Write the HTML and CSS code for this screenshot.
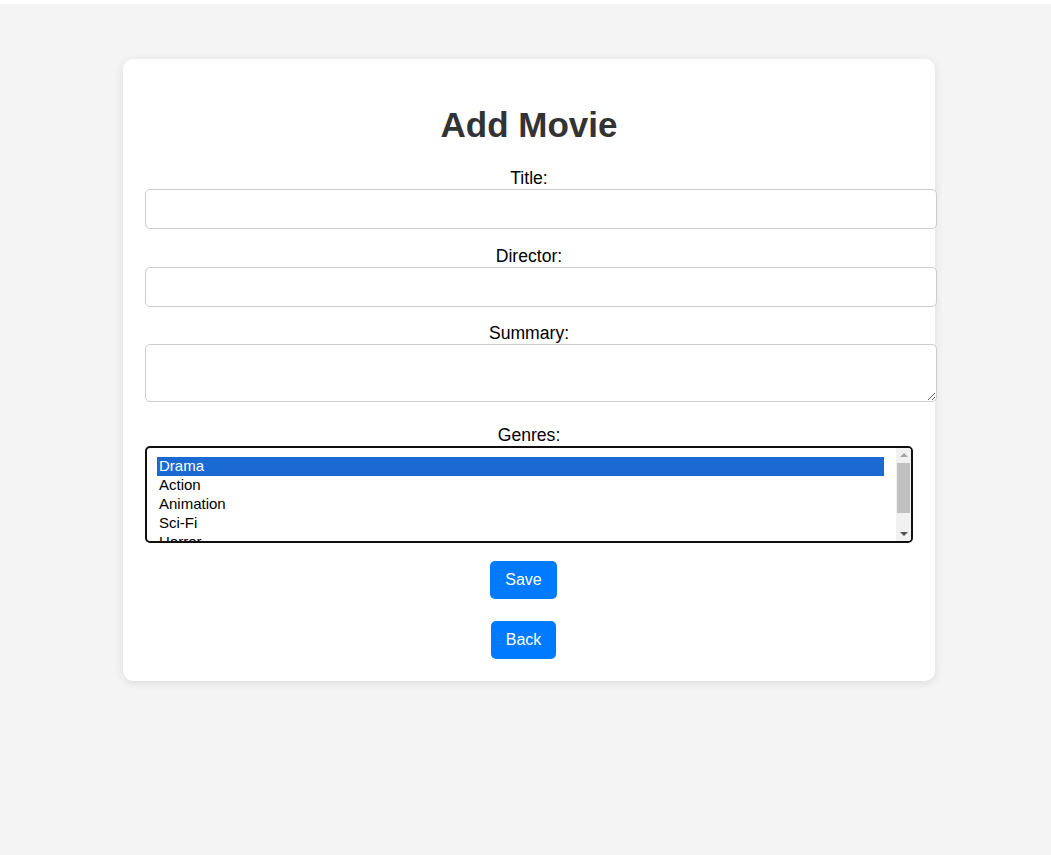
FILE: index.html
```html
<!DOCTYPE html>
<html lang="en">
<head>
<meta charset="utf-8">
<title>Add Movie</title>
<link rel="stylesheet" href="styles.css">
</head>
<body>
<div class="card">
  <h1 class="title">Add Movie</h1>
  <form class="form">
    <label class="label" for="title">Title:</label>
    <input class="field" type="text" id="title">
    <label class="label" for="director">Director:</label>
    <input class="field field-last" type="text" id="director">
    <label class="label" for="summary">Summary:</label>
    <textarea class="field area" id="summary"></textarea>
    <label class="label" for="genres">Genres:</label>
    <div class="select-wrap">
      <select class="genres" id="genres" multiple>
        <option selected>Drama</option>
        <option>Action</option>
        <option>Animation</option>
        <option>Sci-Fi</option>
        <option>Horror</option>
        <option>Comedy</option>
      </select>
      <div class="fake-scroll" aria-hidden="true">
        <span class="arrow arrow-up"></span>
        <span class="thumb"></span>
        <span class="arrow arrow-down"></span>
      </div>
    </div>
    <div class="actions">
      <button class="btn" type="button">Save</button>
      <button class="btn" type="button">Back</button>
    </div>
  </form>
</div>
</body>
</html>
```

FILE: styles.css
```css
html {
  background: #ffffff;
}
body {
  margin: 4px 0 0 0;
  padding: 0 0 0 7px;
  min-height: 851px;
  background: #f4f4f4;
  font-family: "Liberation Sans", Arial, sans-serif;
  display: flex;
  flex-direction: column;
  align-items: center;
}
.card {
  margin-top: 55px;
  width: 768px;
  padding: 22px;
  background: #ffffff;
  border-radius: 10px;
  box-shadow: 0 2px 10px rgba(0, 0, 0, 0.1);
}
.title {
  margin: 24px 0 24px 0;
  font-size: 35px;
  line-height: 39px;
  font-weight: bold;
  color: #333333;
  text-align: center;
}
.form {
  display: flex;
  flex-direction: column;
  margin: 0;
}
.label {
  display: block;
  text-align: center;
  font-size: 17.6px;
  line-height: 20px;
  margin-bottom: 1px;
  color: #000;
}
.field {
  display: block;
  width: 768px;
  padding: 10px 11px;
  border: 1px solid #cccccc;
  border-radius: 5px;
  box-sizing: content-box;
  font-family: "Liberation Sans", Arial, sans-serif;
  font-size: 16px;
  margin: 0 0 17px 0;
  background: #fff;
}
input.field {
  height: 18px;
}
.field-last {
  margin-bottom: 16px;
}
.area {
  height: 36px;
  margin-bottom: 23px;
  resize: vertical;
}
.select-wrap {
  position: relative;
  width: 768px;
  margin: 0 0 18px 0;
}
.genres {
  display: block;
  width: 768px;
  height: 97px;
  box-sizing: border-box;
  padding: 9px 27px 9px 10px;
  border: 2px solid #101010;
  border-radius: 5px;
  font-family: "Liberation Sans", Arial, sans-serif;
  font-size: 15px;
  margin: 0;
  outline: none;
  background: #fff;
  overflow: hidden;
}
.genres option {
  padding: 0 2px 1px 2px;
  line-height: 17px;
  color: #000;
}
.genres option:checked {
  background: #1b6ad3 linear-gradient(#1b6ad3, #1b6ad3);
  color: #ffffff;
}
.fake-scroll {
  position: absolute;
  top: 2px;
  right: 2px;
  bottom: 2px;
  width: 15px;
  background: #f1f1f1;
  border-radius: 0 3px 3px 0;
}
.arrow {
  position: absolute;
  left: 4px;
  width: 0;
  height: 0;
  border-left: 4px solid transparent;
  border-right: 4px solid transparent;
}
.arrow-up {
  top: 5px;
  border-bottom: 4px solid #a3a3a3;
}
.arrow-down {
  bottom: 5px;
  border-top: 4px solid #505050;
}
.thumb {
  position: absolute;
  left: 1px;
  right: 1px;
  top: 15px;
  height: 50px;
  background: #c1c1c1;
}
.actions {
  display: flex;
  flex-direction: column;
  align-items: center;
  gap: 22px;
  padding-right: 11px;
}
.btn {
  display: block;
  padding: 10px 15px;
  font-family: "Liberation Sans", Arial, sans-serif;
  font-size: 16px;
  line-height: 18px;
  color: #ffffff;
  background: #007bff;
  border: none;
  border-radius: 5px;
  cursor: pointer;
}
```
